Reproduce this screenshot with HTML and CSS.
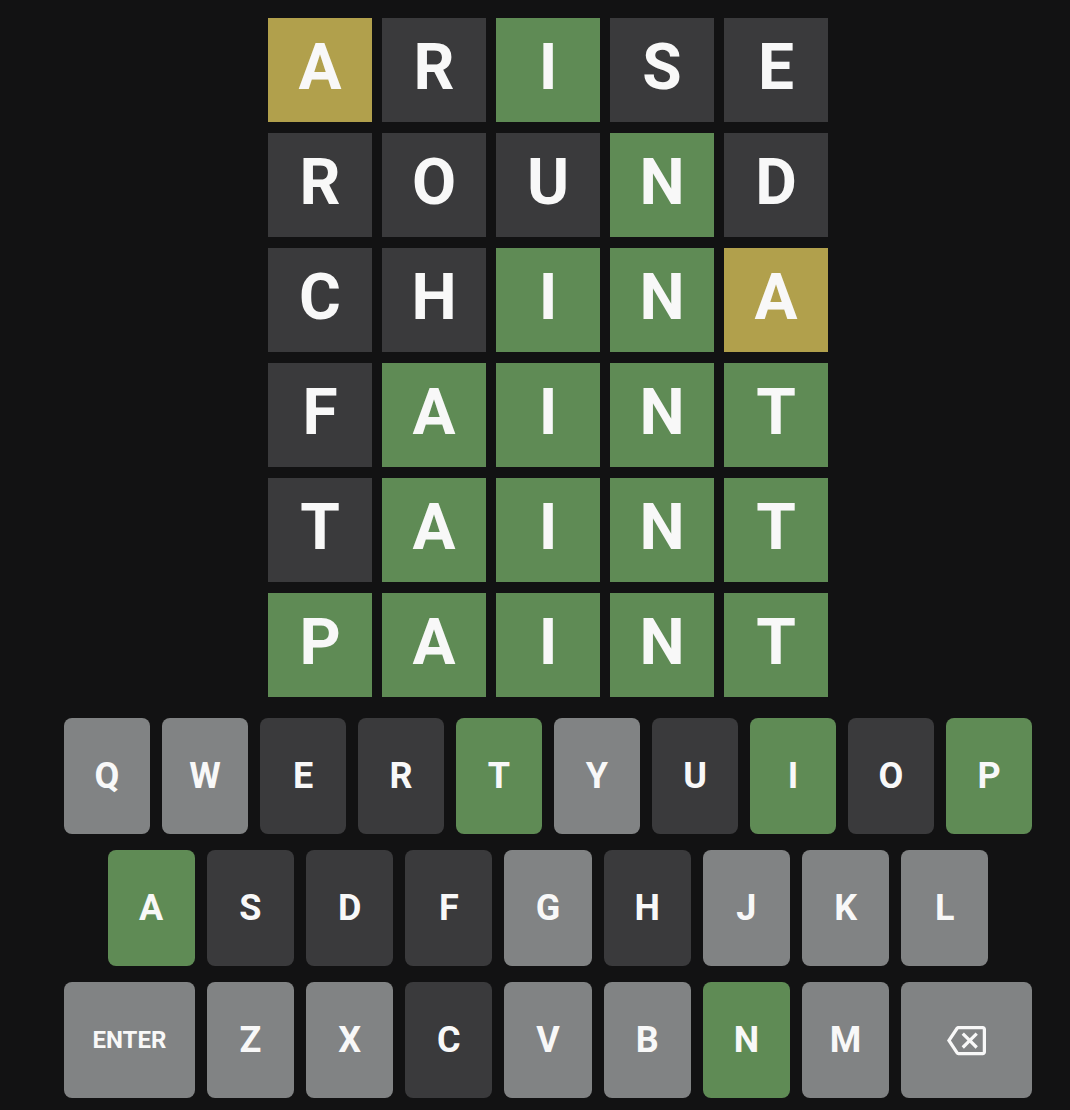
FILE: index.html
```html
<!DOCTYPE html>
<html lang="en">
<head>
<meta charset="utf-8">
<title>Wordle</title>
<link rel="stylesheet" href="styles.css">
</head>
<body>
<main class="game">
  <div class="board">
    <div class="tile present">A</div><div class="tile absent">R</div><div class="tile correct">I</div><div class="tile absent">S</div><div class="tile absent">E</div>
    <div class="tile absent">R</div><div class="tile absent">O</div><div class="tile absent">U</div><div class="tile correct">N</div><div class="tile absent">D</div>
    <div class="tile absent">C</div><div class="tile absent">H</div><div class="tile correct">I</div><div class="tile correct">N</div><div class="tile present">A</div>
    <div class="tile absent">F</div><div class="tile correct">A</div><div class="tile correct">I</div><div class="tile correct">N</div><div class="tile correct">T</div>
    <div class="tile absent">T</div><div class="tile correct">A</div><div class="tile correct">I</div><div class="tile correct">N</div><div class="tile correct">T</div>
    <div class="tile correct">P</div><div class="tile correct">A</div><div class="tile correct">I</div><div class="tile correct">N</div><div class="tile correct">T</div>
  </div>
  <div class="keyboard">
    <div class="row">
      <button class="key">Q</button><button class="key">W</button><button class="key used">E</button><button class="key used">R</button><button class="key hit">T</button><button class="key">Y</button><button class="key used">U</button><button class="key hit">I</button><button class="key used">O</button><button class="key hit">P</button>
    </div>
    <div class="row">
      <div class="spacer"></div>
      <button class="key hit">A</button><button class="key used">S</button><button class="key used">D</button><button class="key used">F</button><button class="key">G</button><button class="key used">H</button><button class="key">J</button><button class="key">K</button><button class="key">L</button>
      <div class="spacer"></div>
    </div>
    <div class="row">
      <button class="key wide enter">ENTER</button><button class="key">Z</button><button class="key">X</button><button class="key used">C</button><button class="key">V</button><button class="key">B</button><button class="key hit">N</button><button class="key">M</button>
      <button class="key wide" aria-label="backspace">
        <svg class="bksp" viewBox="0 0 24 24" width="39" height="39"><path fill="currentColor" d="M22 3H7c-.69 0-1.23.35-1.59.88L0 12l5.41 8.11c.36.53.9.89 1.59.89h15c1.1 0 2-.9 2-2V5c0-1.1-.9-2-2-2zm0 16H7.07L2.4 12l4.66-7H22v14zm-11.59-2L14 13.41 17.59 17 19 15.59 15.41 12 19 8.41 17.59 7 14 10.59 10.41 7 9 8.41 12.59 12 9 15.59z"/></svg>
      </button>
    </div>
  </div>
</main>
</body>
</html>
```

FILE: styles.css
```css
html, body {
  margin: 0;
  padding: 0;
  background: #121213;
}

.game {
  width: 968px;
  margin-left: 64px;
  padding-top: 18px;
  font-family: Roboto, "Liberation Sans", sans-serif;
  color: #f8f8f8;
}

.board {
  display: grid;
  grid-template-columns: repeat(5, 104px);
  grid-auto-rows: 104px;
  column-gap: 10px;
  row-gap: 11px;
  width: 560px;
  margin: 0 auto;
}

.tile {
  display: flex;
  align-items: center;
  justify-content: center;
  font-size: 64px;
  font-weight: 700;
  line-height: 1;
  padding-bottom: 4px;
  box-sizing: border-box;
  color: #f8f8f8;
}

.tile.absent { background: #3a3a3c; }
.tile.present { background: #b1a04c; }
.tile.correct { background: #5f8b55; }

.keyboard {
  margin-top: 21px;
  display: flex;
  flex-direction: column;
  gap: 16px;
}

.row {
  display: flex;
  gap: 12px;
}

.spacer {
  flex: 0.5;
  margin-right: -12px;
}

.row .spacer:last-child {
  margin-right: 0;
  margin-left: -12px;
}

.key {
  flex: 1;
  height: 116px;
  border: 0;
  border-radius: 8px;
  background: #818384;
  color: #f8f8f8;
  font-family: Roboto, "Liberation Sans", sans-serif;
  font-size: 36px;
  font-weight: 700;
  display: flex;
  align-items: center;
  justify-content: center;
  padding: 0;
}

.key.used { background: #3a3a3c; }
.key.hit { background: #5f8b55; }

.key.wide { flex: 1.5; }

.key.enter { font-size: 24px; }

.bksp { display: block; }
```
